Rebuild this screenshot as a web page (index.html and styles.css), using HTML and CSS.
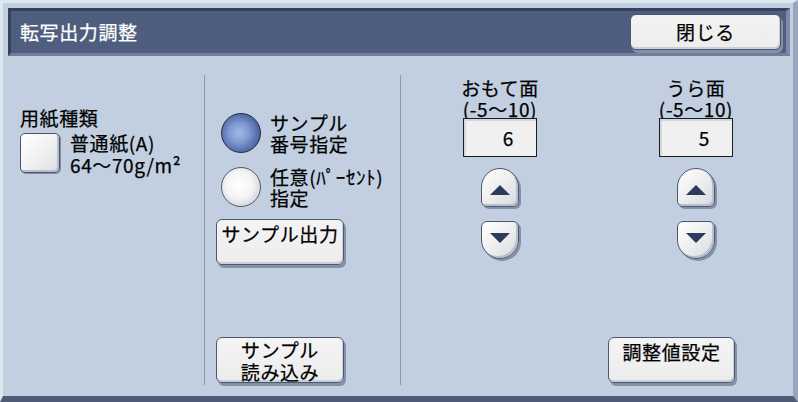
FILE: index.html
```html
<!DOCTYPE html>
<html lang="ja">
<head>
<meta charset="utf-8">
<link rel="stylesheet" href="styles.css">
</head>
<body>
<div class="screen">
  <div class="titlebar">
    <div class="title">転写出力調整</div>
    <div class="btn close">閉じる</div>
  </div>
  <div class="content">
    <div class="col col1">
      <div class="label">用紙種類</div>
      <div class="paper">
        <div class="check"></div>
        <div class="paper-text">普通紙(A)<br>64〜70g/m²</div>
      </div>
    </div>
    <div class="col col2">
      <div class="radio-row first">
        <div class="radio on"></div>
        <div class="radio-text">サンプル<br>番号指定</div>
      </div>
      <div class="radio-row second">
        <div class="radio"></div>
        <div class="radio-text">任意(ﾊﾟｰｾﾝﾄ)<br>指定</div>
      </div>
      <div class="btn wide">サンプル出力</div>
      <div class="btn wide bottom">サンプル<br>読み込み</div>
    </div>
    <div class="col col3">
      <div class="sides">
        <div class="side">
          <div class="side-label">おもて面<br>(-5〜10)</div>
          <div class="value">6</div>
          <div class="step up"><span class="tri-up"></span></div>
          <div class="step down"><span class="tri-down"></span></div>
        </div>
        <div class="side">
          <div class="side-label">うら面<br>(-5〜10)</div>
          <div class="value">5</div>
          <div class="step up"><span class="tri-up"></span></div>
          <div class="step down"><span class="tri-down"></span></div>
        </div>
      </div>
      <div class="btn wide set">調整値設定</div>
    </div>
  </div>
</div>
</body>
</html>
```
FILE: styles.css
```css
html, body {
  margin: 0;
  padding: 0;
}
body {
  width: 798px;
  height: 402px;
  overflow: hidden;
  font-family: "Noto Sans CJK JP", "Noto Sans", sans-serif;
  font-size: 19px;
  letter-spacing: 0.6px;
  color: #000;
  -webkit-text-stroke: 0.25px currentColor;
}
.screen {
  box-sizing: border-box;
  width: 798px;
  height: 402px;
  background: #c1cfe0;
  border-top: 3px solid #dde8ee;
  border-left: 3px solid #dde8ee;
  border-right: 5px solid #97a5bd;
  border-bottom: 6px solid #4f5a76;
  padding: 5px 0 0 5px;
  display: flex;
  flex-direction: column;
}
.titlebar {
  box-sizing: border-box;
  height: 48px;
  margin-right: 3px;
  background: #4f5e7e;
  border-top: 3px solid #36425f;
  border-left: 3px solid #36425f;
  border-right: 4px solid #7b8aa8;
  border-bottom: 3px solid #6f7f9e;
  display: flex;
  align-items: center;
  justify-content: space-between;
  padding-left: 9px;
  padding-right: 5px;
}
.title {
  color: #fff;
  line-height: 22px;
  margin-top: -1px;
}
.btn {
  box-sizing: border-box;
  background: linear-gradient(#f4f4f4, #ececec);
  border: 1px solid #4c5870;
  border-radius: 6px;
  box-shadow: 2px 3px 0 #8590a6, inset -1px -2px 0 #c9d0dc;
  text-align: center;
  line-height: 21px;
}
.close {
  width: 151px;
  height: 36px;
  line-height: 34px;
  margin-top: -1px;
}
.content {
  flex: 1;
  display: flex;
  padding: 19px 0 11px;
}
.col {
  box-sizing: border-box;
  display: flex;
  flex-direction: column;
  flex-shrink: 0;
}
.col1 {
  width: 197px;
  border-right: 1px solid #8c98ac;
  padding: 32px 0 0 12px;
}
.label {
  line-height: 22px;
}
.paper {
  display: flex;
  align-items: flex-start;
  margin-top: 4px;
  gap: 10px;
}
.check {
  box-sizing: border-box;
  width: 40px;
  height: 40px;
  border: 1px solid #4c5468;
  border-radius: 5px;
  background: linear-gradient(135deg, #ffffff, #eeeeee 60%, #d9dde4);
  box-shadow: inset -2px -2px 0 #b8bfcc, 1px 1px 0 #8590a6;
}
.paper-text {
  line-height: 22px;
  margin-top: -1px;
  white-space: nowrap;
}
.col2 {
  width: 196px;
  border-right: 1px solid #8c98ac;
  padding: 37px 0 2px 11px;
}
.radio-row {
  display: flex;
  align-items: center;
  gap: 9px;
  margin-left: 5px;
}
.radio-row.second {
  margin-top: 12px;
}
.radio {
  box-sizing: border-box;
  flex-shrink: 0;
  width: 40px;
  height: 40px;
  border-radius: 50%;
  border: 1px solid #555b69;
  background: radial-gradient(circle at 45% 45%, #ffffff 0, #f4f4f6 45%, #c8ccd6 85%, #8e95a5 100%);
}
.radio.on {
  border-color: #262d40;
  background: radial-gradient(circle at 45% 50%, #a3b8e3 0, #7f99d2 35%, #4b64a3 72%, #25356a 100%);
}
.radio-text {
  line-height: 21px;
  white-space: nowrap;
}
.wide {
  width: 128px;
}
.col2 > .wide {
  margin-top: 11px;
  height: 46px;
  padding-top: 3px;
}
.col2 > .bottom {
  margin-top: auto;
  padding-top: 1px;
  line-height: 22px;
}
.col3 {
  flex: 1 1 auto;
  min-width: 0;
  padding: 2px 0 2px 39px;
}
.sides {
  display: flex;
  gap: 76px;
}
.side {
  width: 120px;
  display: flex;
  flex-direction: column;
  align-items: center;
}
.side-label {
  text-align: center;
  line-height: 21px;
  white-space: nowrap;
}
.value {
  box-sizing: border-box;
  width: 74px;
  height: 39px;
  margin-top: -1px;
  border: 1px solid #1c1c1c;
  background: #f0f0f0;
  box-shadow: inset 2px 2px 0 #d4d8de;
  text-align: right;
  padding-right: 22px;
  line-height: 37px;
}
.step {
  box-sizing: border-box;
  width: 38px;
  height: 39px;
  border: 1px solid #4c5870;
  background: linear-gradient(135deg, #ffffff, #ececec 55%, #d4d9e2);
  box-shadow: 2px 2px 0 #8590a6, inset -2px -2px 0 #b9c1cf;
  display: flex;
  align-items: center;
  justify-content: center;
}
.up {
  margin-top: 11px;
  border-radius: 19px 19px 6px 6px;
}
.down {
  margin-top: 14px;
  height: 38px;
  border-radius: 6px 6px 19px 19px;
}
.tri-up {
  width: 0;
  height: 0;
  border-left: 10px solid transparent;
  border-right: 10px solid transparent;
  border-bottom: 10px solid #2c3b5c;
  margin-top: 4px;
}
.tri-down {
  width: 0;
  height: 0;
  border-left: 10px solid transparent;
  border-right: 10px solid transparent;
  border-top: 10px solid #2c3b5c;
  margin-top: -4px;
}
.col3 > .set {
  margin-top: auto;
  align-self: flex-end;
  margin-right: 58px;
  width: 127px;
  height: 46px;
  padding-top: 3px;
}
```
